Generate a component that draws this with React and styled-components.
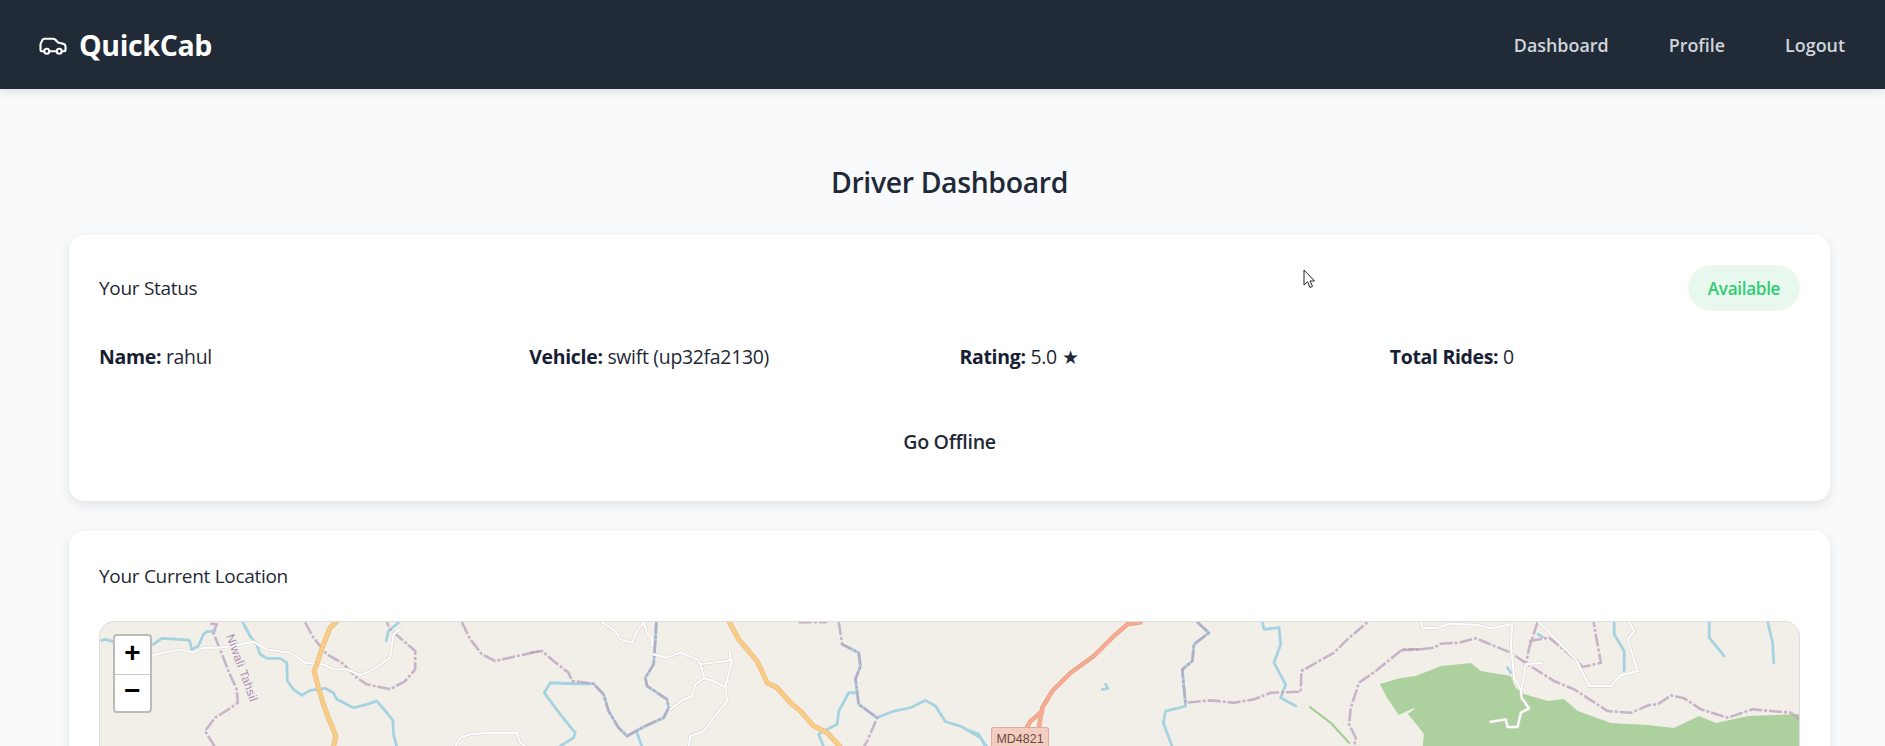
import React from "react";
import styled, { createGlobalStyle } from "styled-components";
import { Car } from "lucide-react";

const Global = createGlobalStyle`
  html, body { margin: 0; padding: 0; height: 746px; overflow: hidden; }
  body { background: #f9fafc; font-family: "Open Sans", "Noto Sans", sans-serif; color: #1f2937; }
  * { box-sizing: border-box; }
`;

const Nav = styled.header`
  height: 89px; background: #212b38; display: flex; align-items: center; justify-content: space-between;
  padding: 0 40px 0 38px; box-shadow: 0 2px 10px rgba(0,0,0,.12); position: relative;
`;
const Logo = styled.div`
  display: flex; align-items: center; gap: 11px; color: #fff; font-weight: 700; font-size: 28.5px; letter-spacing: -0.35px;
`;
const Links = styled.nav`display: flex; gap: 60px;`;
const NavLink = styled.a`color: #d1d5db; font-weight: 600; font-size: 17.9px;`;
const Main = styled.main`width: 1761px; margin-left: 69px; padding-top: 72px;`;
const Title = styled.h1`
  margin: 0 0 31px; text-align: center; font-size: 28.4px; line-height: 43px; font-weight: 600; letter-spacing: -0.35px; color: #1f2937;
`;
const Card = styled.section`
  background: #fff; border-radius: 15px; box-shadow: 0 4px 12px rgba(0,0,0,.1); padding: 30px; margin-bottom: 30px;
`;
const CardHead = styled.div`display: flex; align-items: center; justify-content: space-between; height: 46px;`;
const CardTitle = styled.h2`margin: 0; font-size: 19px; line-height: 31px; font-weight: 400; letter-spacing: -0.3px; color: #1f2937;`;
const Pill = styled.span`
  height: 46px; width: 112px; border-radius: 23px; background: #e8f8ee; color: #2ecc71; font-weight: 600; font-size: 17.1px; letter-spacing: -0.3px;
  display: flex; align-items: center; justify-content: center;
`;
const Info = styled.div`display: grid; grid-template-columns: repeat(4, 1fr); gap: 20px; margin-top: 33px; line-height: 26px;`;
const Item = styled.div`font-size: 19.45px; letter-spacing: -0.3px; color: #1f2937; strong { font-weight: 700; color: #172033; }`;
const Actions = styled.div`display: flex; justify-content: center; margin-top: 42px;`;
const Button = styled.button`
  height: 59px; padding: 0 20px; border: 0; background: transparent; font: 600 19.6px "Open Sans", sans-serif; letter-spacing: -0.3px; color: #1f2937;
`;
const MapBox = styled.div`
  position: relative; height: 400px; margin-top: 29px; border: 1px solid #ddd; border-radius: 15px; overflow: hidden; background: #f2efe9;
`;
const MapSvg = styled.svg`display: block; width: 100%; height: 100%;`;
const Zoom = styled.div`
  position: absolute; left: 13px; top: 12px; width: 39px; border: 2px solid #bdbbb7; border-radius: 4px; background: #fff; overflow: hidden;
`;
const ZoomBtn = styled.div`
  height: 37.5px; display: flex; align-items: center; justify-content: center; color: #000; font: 700 28px "Liberation Mono", monospace;
  & + & { border-top: 1px solid #ccc; }
`;
const Cursor = styled.svg`position: absolute; left: 1303px; top: 269px;`;

const P = (ox, list) => "M" + list.map(([x, y]) => `${(ox + x / 3).toFixed(1)} ${(600 + y / 3).toFixed(1)}`).join("L");

const rivers = [
  P(90, [[35,118],[45,115],[70,122],[110,120],[190,130],[215,112],[280,116],[298,118],[305,145],[325,135],[340,100],[350,92],[375,90]]),
  P(90, [[458,64],[480,105],[500,130],[510,160],[530,172],[570,172],[590,185],[592,240],[610,265],[635,283],[660,268],[705,262],[730,275],[740,295],[790,320],[830,310],[860,300],[890,335],[908,358],[910,400],[920,438]]),
  P(90, [[888,120],[895,90],[925,65]]),
  P(530, [[378,64],[375,120],[370,190],[345,230],[350,255],[410,295],[415,320],[400,350],[345,375],[290,405],[265,380],[235,330],[220,280],[190,248],[130,248],[60,245],[42,275],[90,340],[135,395],[130,410],[85,438]]),
  P(530, [[320,395],[335,438]]),
  P(530, [[935,130],[985,155],[990,195],[975,235],[985,310],[1040,350],[1090,330],[1140,320],[1185,298],[1215,315],[1245,362],[1290,375],[1350,410],[1370,438]]),
  P(530, [[865,400],[880,438]]),
  P(530, [[870,395],[920,370],[925,330],[955,275],[980,275]]),
  P(970, [[0,390],[25,400],[45,438]]),
  P(970, [[680,64],[715,95],[670,130],[665,180],[635,205],[640,260],[645,315],[585,330],[578,365],[605,438]]),
  P(970, [[875,64],[880,85],[925,80],[930,130],[910,185],[945,250],[930,290],[975,315]]),
  P(970, [[395,265],[412,262],[405,250]]),
  P(1400, [[640,64],[640,100],[670,150],[670,210]]),
  P(1400, [[925,64],[925,110],[970,165]]),
  P(1400, [[1100,64],[1115,125],[1118,185]]),
  P(1400, [[412,100],[425,108]]),
  P(1400, [[320,200],[330,215]]),
];
const bounds = [
  P(90, [[360,68],[380,70],[370,95],[400,170],[415,210],[440,265],[443,305],[415,325],[375,350],[345,390],[375,438]]),
  P(90, [[645,64],[670,110],[710,160],[755,185],[800,230],[830,250],[900,265],[945,240],[975,205],[975,150],[900,85],[890,64]]),
  P(90, [[1115,64],[1140,115],[1175,160],[1215,180],[1280,165],[1350,150]]),
  P(530, [[0,155],[35,150],[70,180],[115,215],[125,240],[190,248],[220,280],[235,330],[265,380],[290,405],[345,375],[400,350],[415,320],[410,295],[350,255],[345,230],[370,190],[375,120],[378,64]]),
  P(530, [[805,64],[890,64]]),
  P(530, [[925,64],[935,130],[985,155],[990,195],[975,235],[985,310],[1040,350],[1010,420],[1000,438]]),
  P(970, [[680,64],[715,95],[670,130],[665,180],[635,205],[640,260],[645,305],[720,298],[790,305],[850,295],[900,275],[990,272],[992,210],[1090,155],[1130,115],[1190,64]]),
  P(970, [[1350,145],[1295,145],[1215,210],[1165,245],[1140,320],[1135,370],[1155,410],[1150,438]]),
  P(1400, [[0,148],[60,145],[100,140],[120,128],[175,125],[225,112],[330,155],[380,190],[460,240],[520,265],[620,330],[690,335],[745,312],[770,310],[810,283],[850,292],[900,325],[980,350],[1055,325],[1170,335],[1195,355]]),
  P(1400, [[410,64],[385,140],[375,190]]),
  P(1400, [[385,120],[445,110],[530,180],[545,198],[600,185],[578,64]]),
];
const tracks = [
  P(90, [[190,162],[270,145],[310,155],[340,140],[380,140],[430,135],[490,122],[530,145],[600,155],[645,185],[700,190],[730,205],[770,205],[810,222],[850,205],[900,170],[910,100],[930,85]]),
  P(90, [[1095,438],[1110,410],[1140,400],[1200,395],[1280,395],[1290,425],[1310,438]]),
  P(530, [[215,64],[255,90],[270,115],[305,125],[320,90],[340,65],[350,95],[365,110],[365,135]]),
  P(530, [[370,160],[410,170],[450,155],[500,175],[510,190],[600,178],[598,150]]),
  P(530, [[510,190],[522,232],[495,250],[485,285],[460,295],[420,325]]),
  P(530, [[522,232],[550,240],[585,258],[605,178]]),
  P(530, [[585,258],[590,300],[550,350],[520,390],[480,405],[475,438]]),
  P(1400, [[60,64],[65,80],[105,82],[150,68],[230,72],[270,82],[330,70]]),
  P(1400, [[335,64],[330,130],[340,230],[360,265],[362,290],[385,322],[360,335],[350,378],[320,378],[315,355],[270,362]]),
  P(1400, [[375,190],[362,265]]),
  P(1400, [[415,64],[470,120],[525,175],[545,215],[565,255],[630,255],[655,225],[710,210],[680,115],[700,90],[685,64]]),
  P(1400, [[375,190],[425,185]]),
];
const majors = [
  P(90, [[740,62],[720,80],[700,130],[680,190],[672,210],[685,260],[700,310],[715,350],[737,405],[730,438]]),
  P(530, [[597,64],[625,115],[680,180],[710,245],[740,260],[780,305],[810,330],[850,375],[890,395],[930,438]]),
];
const pink = [
  P(970, [[510,64],[470,70],[430,105],[370,165],[300,215],[245,270],[215,320],[205,380]]),
  P(970, [[215,330],[180,360],[165,385]]),
];

const forest = "M1379 683L1400 677L1415 675L1440 665L1470 662L1480 670L1510 675L1515 687L1523 693L1547 700L1563 698L1577 710L1610 722L1647 724L1673 727L1698 715L1715 722L1747 715L1798 713L1800 746L1422 746L1423 733L1417 725L1407 713L1415 707L1411 708L1398 714L1387 698Z";

const MapDrawing = () => (
  <MapSvg viewBox="100 621 1698 398" preserveAspectRatio="xMinYMin slice">
    <defs><filter id="soft" filterUnits="userSpaceOnUse" x="100" y="621" width="1700" height="400"><feGaussianBlur stdDeviation="0.5" /></filter></defs>
    <g filter="url(#soft)" fill="none" strokeLinejoin="round" strokeLinecap="round">
      <path d={forest} fill="#add19e" />
      <path d={P(970, [[1018,318],[1080,365],[1135,425]])} stroke="#a5cf96" strokeWidth="2.2" />
      {rivers.map((d, i) => <path key={i} d={d} stroke="#a6d3e0" strokeWidth="2.8" />)}
      {bounds.map((d, i) => <path key={i} d={d} stroke="#b9a0bd" strokeWidth="2.6" strokeLinecap="butt" strokeDasharray="13 2 3 2" opacity=".75" />)}
      {tracks.map((d, i) => <path key={i} d={d} stroke="#dcd9d4" strokeWidth="3.2" />)}
      {tracks.map((d, i) => <path key={i} d={d} stroke="#fff" strokeWidth="1.9" />)}
      {majors.map((d, i) => <path key={i} d={d} stroke="#e9bb7c" strokeWidth="5" />)}
      {majors.map((d, i) => <path key={i} d={d} stroke="#f9cd88" strokeWidth="3.6" />)}
      {pink.map((d, i) => <path key={i} d={d} stroke="#e89a80" strokeWidth="4.4" />)}
      {pink.map((d, i) => <path key={i} d={d} stroke="#f6ab92" strokeWidth="3.2" />)}
    </g>
    <rect x="991" y="726.5" width="57" height="24" rx="2.5" fill="#f5cdc0" stroke="#dcae9f" />
    <text x="1019.5" y="742" textAnchor="middle" fontFamily="'Liberation Sans', sans-serif" fontSize="12.5" fill="#6d4a40">MD4821</text>
    <text transform="translate(226 635) rotate(70)" fontFamily="'Liberation Sans', sans-serif" fontSize="12" fill="#ab8eb4" letterSpacing=".4">Niwali Tahsil</text>
  </MapSvg>
);

export default function App() {
  return (
    <>
      <Global />
      <Nav>
        <Logo><Car size={30} strokeWidth={1.7} />QuickCab</Logo>
        <Links>
          <NavLink>Dashboard</NavLink>
          <NavLink>Profile</NavLink>
          <NavLink>Logout</NavLink>
        </Links>
      </Nav>
      <Main>
        <Title>Driver Dashboard</Title>
        <Card>
          <CardHead>
            <CardTitle>Your Status</CardTitle>
            <Pill>Available</Pill>
          </CardHead>
          <Info>
            <Item><strong>Name:</strong> rahul</Item>
            <Item><strong>Vehicle:</strong> swift (up32fa2130)</Item>
            <Item><strong>Rating:</strong> 5.0 ★</Item>
            <Item><strong>Total Rides:</strong> 0</Item>
          </Info>
          <Actions><Button>Go Offline</Button></Actions>
        </Card>
        <Card>
          <CardTitle>Your Current Location</CardTitle>
          <MapBox>
            <MapDrawing />
            <Zoom><ZoomBtn>+</ZoomBtn><ZoomBtn>−</ZoomBtn></Zoom>
          </MapBox>
        </Card>
      </Main>
      <Cursor width="13" height="20" viewBox="0 0 13 20">
        <path d="M1 1V16L4.5 12.8L7 18.5L9.5 17.4L7 12H11.5Z" fill="#fff" stroke="#222" strokeWidth="1" />
      </Cursor>
    </>
  );
}
